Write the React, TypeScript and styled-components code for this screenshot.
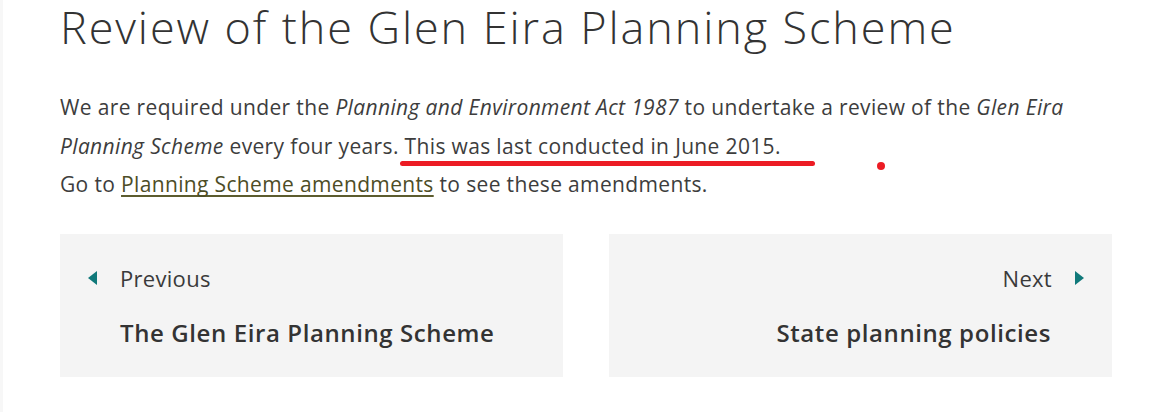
import React from "react";
import styled, { createGlobalStyle } from "styled-components";

const GlobalStyle = createGlobalStyle`
  html, body {
    margin: 0;
    padding: 0;
    background: #ffffff;
  }
  body {
    font-family: "Open Sans", "Lato", Arial, sans-serif;
    color: #3b3b3b;
  }
`;

const Page = styled.div`
  min-height: 412px;
  box-sizing: border-box;
  border-left: 3px solid #f7f7f7;
  padding: 0 42px 0 57px;
`;

const Title = styled.h1`
  margin: 0;
  font-size: 45px;
  line-height: 53px;
  font-weight: 300;
  letter-spacing: 1.9px;
  color: #333333;
  white-space: nowrap;
`;

const Intro = styled.p`
  position: relative;
  margin: 35px 0 0;
  font-size: 21px;
  line-height: 38.5px;
  letter-spacing: 0.35px;
  color: #3d3d3d;
`;

const Marked = styled.span`
  position: relative;

  &::after {
    content: "";
    position: absolute;
    left: -5px;
    right: -34px;
    bottom: -6px;
    height: 5px;
    border-radius: 3px;
    background: #ec1c24;
  }
`;

const Dot = styled.span`
  position: absolute;
  left: 817px;
  top: 74px;
  width: 8px;
  height: 8px;
  border-radius: 50%;
  background: #ec1c24;
`;

const TextLink = styled.a`
  color: #4d4d26;
  text-decoration: underline;
  text-decoration-color: #5c5c2e;
  text-decoration-skip-ink: none;
  text-underline-offset: 3px;
`;

const Pager = styled.nav`
  margin-top: 30px;
  display: grid;
  grid-template-columns: 503px 503px;
  column-gap: 46px;
`;

const Card = styled.a<{ $align: "left" | "right" }>`
  display: flex;
  flex-direction: column;
  align-items: ${({ $align }) => ($align === "left" ? "flex-start" : "flex-end")};
  background: #f4f4f4;
  padding: 28px;
  text-decoration: none;
  color: #333333;
`;

const Label = styled.div<{ $reverse?: boolean }>`
  display: flex;
  align-items: center;
  flex-direction: ${({ $reverse }) => ($reverse ? "row-reverse" : "row")};
  gap: 23px;
  font-size: 22px;
  line-height: 32px;
  letter-spacing: 0.3px;
  color: #3a3a3a;
`;

const Arrow = styled.svg`
  width: 9px;
  height: 14px;
  flex: none;
`;

const CardTitle = styled.div<{ $align: "left" | "right" }>`
  margin-top: 23px;
  font-size: 24px;
  line-height: 32px;
  font-weight: 600;
  letter-spacing: 0.6px;
  color: #333333;
  padding-left: ${({ $align }) => ($align === "left" ? "32px" : "0")};
  padding-right: ${({ $align }) => ($align === "right" ? "33px" : "0")};
`;

const LeftArrow = () => (
  <Arrow viewBox="0 0 9 14">
    <path d="M9 0 L0 7 L9 14 Z" fill="#10797a" />
  </Arrow>
);

const RightArrow = () => (
  <Arrow viewBox="0 0 9 14">
    <path d="M0 0 L9 7 L0 14 Z" fill="#10797a" />
  </Arrow>
);

export default function App() {
  return (
    <>
      <GlobalStyle />
      <Page>
        <Title>Review of the Glen Eira Planning Scheme</Title>
        <Intro>
          We are required under the <em>Planning and Environment Act 1987</em> to
          undertake a review of the <em>Glen Eira</em>{" "}
          <em>Planning Scheme</em> every four years.{" "}
          <Marked>This was last conducted in June 2015.</Marked>
          <br />
          Go to <TextLink href="#">Planning Scheme amendments</TextLink> to see
          these amendments.
          <Dot />
        </Intro>
        <Pager>
          <Card href="#" $align="left">
            <Label>
              <LeftArrow />
              Previous
            </Label>
            <CardTitle $align="left">The Glen Eira Planning Scheme</CardTitle>
          </Card>
          <Card href="#" $align="right">
            <Label $reverse>
              <RightArrow />
              Next
            </Label>
            <CardTitle $align="right">State planning policies</CardTitle>
          </Card>
        </Pager>
      </Page>
    </>
  );
}
